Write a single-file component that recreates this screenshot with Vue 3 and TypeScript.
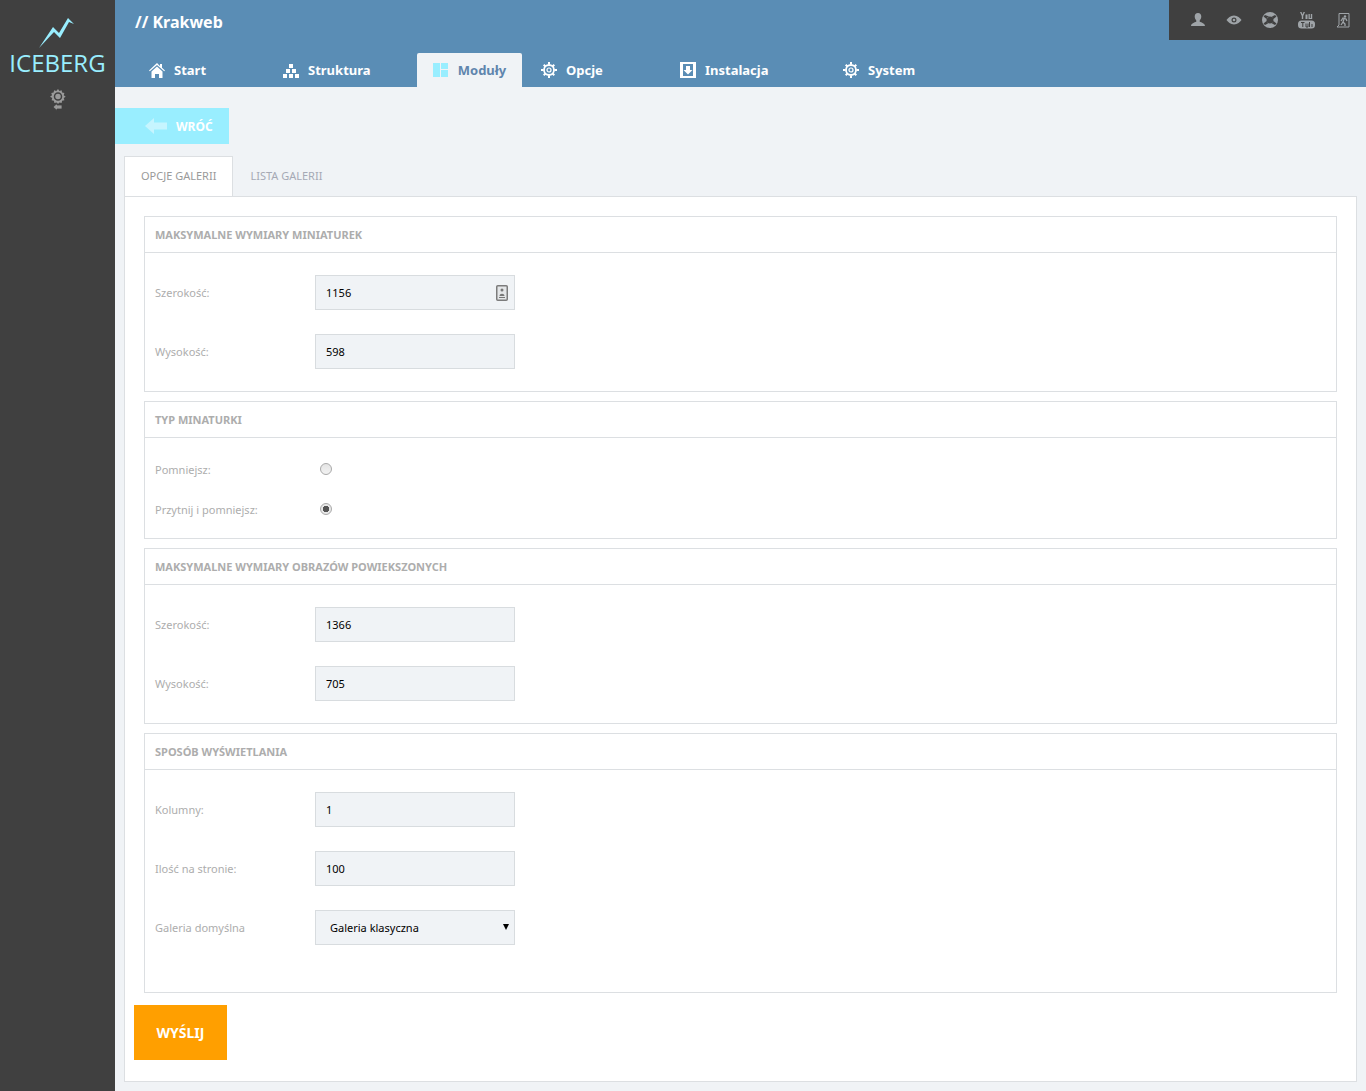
<script setup lang="ts">
interface NavItem {
  label: string;
  icon: string;
  active?: boolean;
  width: number;
}

interface Field {
  label: string;
  value: string;
  autofill?: boolean;
}

const navItems: NavItem[] = [
  { label: 'Start', icon: 'home', width: 134 },
  { label: 'Struktura', icon: 'tree', width: 149 },
  { label: 'Moduły', icon: 'modules', active: true, width: 105 },
  { label: 'Opcje', icon: 'gear', width: 139 },
  { label: 'Instalacja', icon: 'install', width: 163 },
  { label: 'System', icon: 'gear', width: 100 },
];

const thumbFields: Field[] = [
  { label: 'Szerokość:', value: '1156', autofill: true },
  { label: 'Wysokość:', value: '598' },
];

const largeFields: Field[] = [
  { label: 'Szerokość:', value: '1366' },
  { label: 'Wysokość:', value: '705' },
];

const displayFields: Field[] = [
  { label: 'Kolumny:', value: '1' },
  { label: 'Ilość na stronie:', value: '100' },
];
</script>

<template>
  <div class="page">
    <aside class="sidebar">
      <svg class="logo-mark" width="36" height="30" viewBox="0 0 36 30">
        <polygon points="0,30 14,9 20,15 29,0 35,6 30,4 21,20 15,14" fill="#99eeff" />
      </svg>
      <div class="logo-text">ICEBERG</div>
      <svg class="side-icon" width="16" height="22" viewBox="0 0 16 22" fill="#9a9a9a">
        <path d="M8 0l1.4 2 2.2-.7.5 2.3 2.3.5-.7 2.2 2 1.4-2 1.4.7 2.2-2.3.5-.5 2.3-2.2-.7L8 15l-1.4-1.6-2.2.7-.5-2.3-2.300-.5.7-2.200L0 7.700l2-1.400-.7-2.200 2.300-.5.5-2.300 2.200.7z" />
        <circle cx="8" cy="7.500" r="3.500" fill="none" stroke="#404040" stroke-width="1.500" />
        <path d="M3 18l4-3.500V16h5v4H7v1.500z" stroke="#404040" stroke-width=".8" />
      </svg>
    </aside>

    <div class="main">
      <header class="header">
        <div class="title">// Krakweb</div>
        <nav class="nav">
          <a v-for="item in navItems" :key="item.label" class="nav-item" :class="{ active: item.active }" :style="{ width: item.width + 'px' }">
            <svg class="nav-icon" width="16" height="16" viewBox="0 0 16 16" fill="currentColor">
              <template v-if="item.icon === 'home'">
                <path d="M8 1L0 8.500l.8.800L8 3l7.200 6.300.8-.800-3-2.800V2h-2v2z" />
                <path d="M2.500 9.500L8 4.500l5.500 5V16h-3.500v-4H6v4H2.500z" />
              </template>
              <template v-else-if="item.icon === 'tree'">
                <rect x="6" y="2" width="4" height="4" />
                <rect x="3" y="7" width="4" height="4" />
                <rect x="9" y="7" width="4" height="4" />
                <rect x="0" y="12" width="4" height="4" />
                <rect x="6" y="12" width="4" height="4" />
                <rect x="12" y="12" width="4" height="4" />
              </template>
              <template v-else-if="item.icon === 'modules'">
                <rect y="1" width="7" height="14" fill="#99eeff" />
                <rect x="8" y="1" width="7" height="6" fill="#99eeff" />
                <rect x="8" y="8" width="7" height="7" fill="#99eeff" />
              </template>
              <template v-else-if="item.icon === 'gear'">
                <circle cx="8" cy="8" r="5" fill="none" stroke="currentColor" stroke-width="1.800" />
                <circle cx="8" cy="8" r="2" fill="none" stroke="currentColor" stroke-width="1.200" />
                <path d="M7 0h2v2.500H7zM7 13.500h2V16H7zM0 7h2.500v2H0zM13.500 7H16v2h-2.500zM2 3.400L3.400 2l1.800 1.800-1.400 1.400zM10.800 12.200l1.400-1.400L14 12.600 12.600 14zM2 12.600l1.800-1.800 1.400 1.400L3.400 14zM10.800 3.800L12.600 2 14 3.400l-1.800 1.800z" />
              </template>
              <template v-else>
                <path fill-rule="evenodd" d="M0 0h16v16H0zM3 2v12h10V2z" />
                <path d="M6 4h4v4h2.500L8 12.500 3.500 8H6z" />
              </template>
            </svg>
            <span>{{ item.label }}</span>
          </a>
        </nav>
        <div class="tools">
          <svg width="16" height="16" viewBox="0 0 16 16" fill="#9fa4a8"><path d="M8 1c2.200 0 3.300 1.600 3.300 3.600 0 1.500-.7 3-1.600 3.800v1.300c1.800.6 5.300 1.700 5.300 4.300H1c0-2.600 3.500-3.700 5.300-4.300V8.400C5.400 7.600 4.700 6.100 4.700 4.600 4.700 2.600 5.800 1 8 1z" /></svg>
          <svg width="16" height="16" viewBox="0 0 16 16" fill="#9fa4a8"><path fill-rule="evenodd" d="M8 3.500c3.500 0 6 2.500 7.500 4.500C14 10 11.500 12.500 8 12.500S2 10 .5 8C2 6 4.500 3.500 8 3.500zM8 5.500a2.500 2.500 0 100 5 2.500 2.500 0 000-5z" /><circle cx="8" cy="8" r="1.300" /></svg>
          <svg width="16" height="16" viewBox="0 0 16 16" fill="#9fa4a8"><path fill-rule="evenodd" d="M8 0a8 8 0 110 16A8 8 0 018 0zm0 4.500a3.500 3.500 0 100 7 3.500 3.500 0 000-7zM3 3L1.500 4.500 4.500 7 7 4.500zM13 3l-3 1.500L11.500 7l3-2.500zM4.500 9l-3 2.500L3 13l3-1.500zM11.500 9L10 11.500l3 1.500 1.500-1.500z" /></svg>
          <svg width="17" height="17" viewBox="0 0 17 17" fill="#9fa4a8"><path d="M2 0h1.500l1 2.500 1-2.500H7L5.200 4v3H3.800V4zM7.500 2.500h2V7h-2zM10.500 2h1.300v4h1V2h1.400v5h-3.700z" /><rect x="0" y="8.500" width="17" height="8" rx="3.500" /><path d="M3 10.500h3.500M4.800 10.500V15M8 11.500V15h2v-3.500M11.500 10v5M14 12v3" stroke="#404040" stroke-width="1" fill="none" /></svg>
          <svg width="16" height="17" viewBox="0 0 16 17" fill="none" stroke="#9fa4a8" stroke-width="1"><path d="M4 13V1.500h10V15H2l2-2" /><circle cx="10" cy="4.500" r="1.200" fill="#9fa4a8" stroke="none" /><path d="M6 9l2-3 3 1 1 2M9 7l-1 3 2 2v2M8 10l-2 3" stroke-width="1.300" /></svg>
        </div>
      </header>

      <div class="content">
        <a class="back-btn">
          <svg width="22" height="16" viewBox="0 0 22 16" fill="#c6f5ff"><path d="M0 8l9-8v4.500h13v7H9V16z" /></svg>
          <span>WRÓĆ</span>
        </a>

        <div class="tabs">
          <a class="tab active">OPCJE GALERII</a>
          <a class="tab">LISTA GALERII</a>
        </div>

        <form class="panel" @submit.prevent>
          <section class="box">
            <h3 class="box-title">MAKSYMALNE WYMIARY MINIATUREK</h3>
            <div class="box-body">
              <div v-for="f in thumbFields" :key="f.label" class="row">
                <label class="row-label">{{ f.label }}</label>
                <div class="control">
                  <input class="input" type="text" :value="f.value" />
                  <svg v-if="f.autofill" class="autofill" width="12" height="16" viewBox="0 0 12 16">
                    <rect x=".75" y=".75" width="10.500" height="14.500" rx="1" fill="#e4e6e8" stroke="#7c7c7c" stroke-width="1.500" />
                    <circle cx="6" cy="5" r="1.500" fill="#777" />
                    <path d="M3.500 11c0-3 5-3 5 0zM3 12h6v1H3z" fill="#777" />
                  </svg>
                </div>
              </div>
            </div>
          </section>

          <section class="box">
            <h3 class="box-title">TYP MINATURKI</h3>
            <div class="box-body radios">
              <div class="radio-row">
                <label class="row-label">Pomniejsz:</label>
                <input class="radio" type="radio" name="typ" />
              </div>
              <div class="radio-row">
                <label class="row-label">Przytnij i pomniejsz:</label>
                <input class="radio" type="radio" name="typ" checked />
              </div>
            </div>
          </section>

          <section class="box">
            <h3 class="box-title">MAKSYMALNE WYMIARY OBRAZÓW POWIEKSZONYCH</h3>
            <div class="box-body">
              <div v-for="f in largeFields" :key="f.label" class="row">
                <label class="row-label">{{ f.label }}</label>
                <div class="control"><input class="input" type="text" :value="f.value" /></div>
              </div>
            </div>
          </section>

          <section class="box">
            <h3 class="box-title">SPOSÓB WYŚWIETLANIA</h3>
            <div class="box-body display">
              <div v-for="f in displayFields" :key="f.label" class="row">
                <label class="row-label">{{ f.label }}</label>
                <div class="control"><input class="input" type="text" :value="f.value" /></div>
              </div>
              <div class="row">
                <label class="row-label">Galeria domyślna</label>
                <div class="control select-wrap">
                  <select class="input select">
                    <option>Galeria klasyczna</option>
                  </select>
                </div>
              </div>
            </div>
          </section>

          <button class="submit" type="submit">WYŚLIJ</button>
        </form>
      </div>
    </div>
  </div>
</template>

<style>
html, body {
  margin: 0;
  background: #f0f3f6;
}
</style>

<style scoped>
.page {
  display: flex;
  min-height: 1091px;
  font-family: "Noto Sans", "Liberation Sans", sans-serif;
}

.sidebar {
  width: 115px;
  flex-shrink: 0;
  background: #404040;
  display: flex;
  flex-direction: column;
  align-items: center;
  padding-top: 18px;
  box-sizing: border-box;
}

.logo-mark {
  margin-left: -2px;
}

.logo-text {
  font-family: "Open Sans", sans-serif;
  font-size: 24px;
  line-height: 28px;
  color: #99eeff;
  margin-top: 1px;
}

.side-icon {
  margin-top: 12px;
}

.main {
  flex: 1;
  min-width: 0;
}

.header {
  position: relative;
  height: 87px;
  background: #5a8db5;
  display: flex;
  flex-direction: column;
  justify-content: space-between;
}

.title {
  padding: 11px 0 0 20px;
  font-size: 16px;
  line-height: 22px;
  font-weight: 700;
  color: #fff;
}

.nav {
  display: flex;
  height: 34px;
  padding-left: 34px;
}

.nav-item {
  display: flex;
  align-items: center;
  gap: 9px;
  font-size: 13px;
  font-weight: 700;
  color: #fff;
  box-sizing: border-box;
}

.nav-item.active {
  background: #f0f3f6;
  color: #5f85ad;
  justify-content: center;
  margin-left: -15px;
  margin-right: 19px;
  border-radius: 2px 2px 0 0;
}

.tools {
  position: absolute;
  top: 0;
  right: 0;
  width: 197px;
  height: 40px;
  background: #404040;
  display: flex;
  align-items: center;
  gap: 20px;
  padding-left: 21px;
  box-sizing: border-box;
}

.content {
  padding: 21px 9px 10px;
}

.back-btn {
  display: flex;
  align-items: center;
  gap: 9px;
  width: 114px;
  height: 36px;
  margin-left: -9px;
  padding-left: 30px;
  box-sizing: border-box;
  background: #99eeff;
  color: #fff;
  font-size: 12px;
  font-weight: 700;
}

.tabs {
  display: flex;
  margin-top: 12px;
  height: 40px;
}

.tab {
  padding: 0 16px;
  line-height: 37px;
  font-size: 11px;
  color: #a5a9b5;
  border: 1px solid transparent;
  box-sizing: border-box;
}

.tab.active {
  background: #fff;
  border-color: #dcdfe2;
  border-bottom: 0;
  color: #9a9a9a;
}

.panel {
  background: #fff;
  border: 1px solid #dcdfe2;
  padding: 19px 19px 21px 19px;
  height: 886px;
  box-sizing: border-box;
  display: flex;
  flex-direction: column;
  gap: 9px;
}

.box {
  border: 1px solid #dcdfe2;
}

.box-title {
  margin: 0;
  height: 36px;
  line-height: 35px;
  padding-left: 10px;
  border-bottom: 1px solid #dcdfe2;
  box-sizing: border-box;
  font-size: 11px;
  font-weight: 700;
  color: #adadad;
}

.box-body {
  padding: 22px 10px 22px;
  display: flex;
  flex-direction: column;
  gap: 24px;
}

.box-body.radios {
  padding: 11px 10px 9px;
  gap: 0;
}

.box-body.display {
  padding-bottom: 47px;
}

.row {
  display: flex;
  align-items: center;
  height: 35px;
}

.radio-row {
  display: flex;
  align-items: center;
  height: 40px;
}

.row-label {
  width: 160px;
  flex-shrink: 0;
  font-size: 11px;
  color: #adadad;
}

.control {
  position: relative;
  width: 200px;
  height: 35px;
}

.input {
  width: 100%;
  height: 100%;
  box-sizing: border-box;
  background: #f0f3f6;
  border: 1px solid #d8dcdf;
  border-radius: 0;
  padding: 0 10px;
  font-family: "Noto Sans", sans-serif;
  font-size: 11px;
  color: #000;
  outline: none;
}

.autofill {
  position: absolute;
  right: 7px;
  top: 10px;
}

.select {
  appearance: none;
  padding-left: 14px;
}

.select-wrap::after {
  content: "";
  position: absolute;
  right: 6px;
  top: 14px;
  border-left: 3.500px solid transparent;
  border-right: 3.500px solid transparent;
  border-top: 6px solid #000;
}

.radio {
  appearance: none;
  width: 12px;
  height: 12px;
  margin: 0 0 0 5px;
  border-radius: 50%;
  border: 1px solid #a9a9a9;
  background: linear-gradient(#e4e4e4, #f2f2f2);
}

.radio:checked {
  background: radial-gradient(circle, #555 0 3px, #e8e8e8 3.500px);
}

.submit {
  width: 93px;
  height: 56px;
  margin: 3px 0 0 -10px;
  background: #ff9f00;
  border: 0;
  color: #fff;
  font-family: "Noto Sans", sans-serif;
  font-size: 14px;
  font-weight: 700;
  padding: 0;
}
</style>
